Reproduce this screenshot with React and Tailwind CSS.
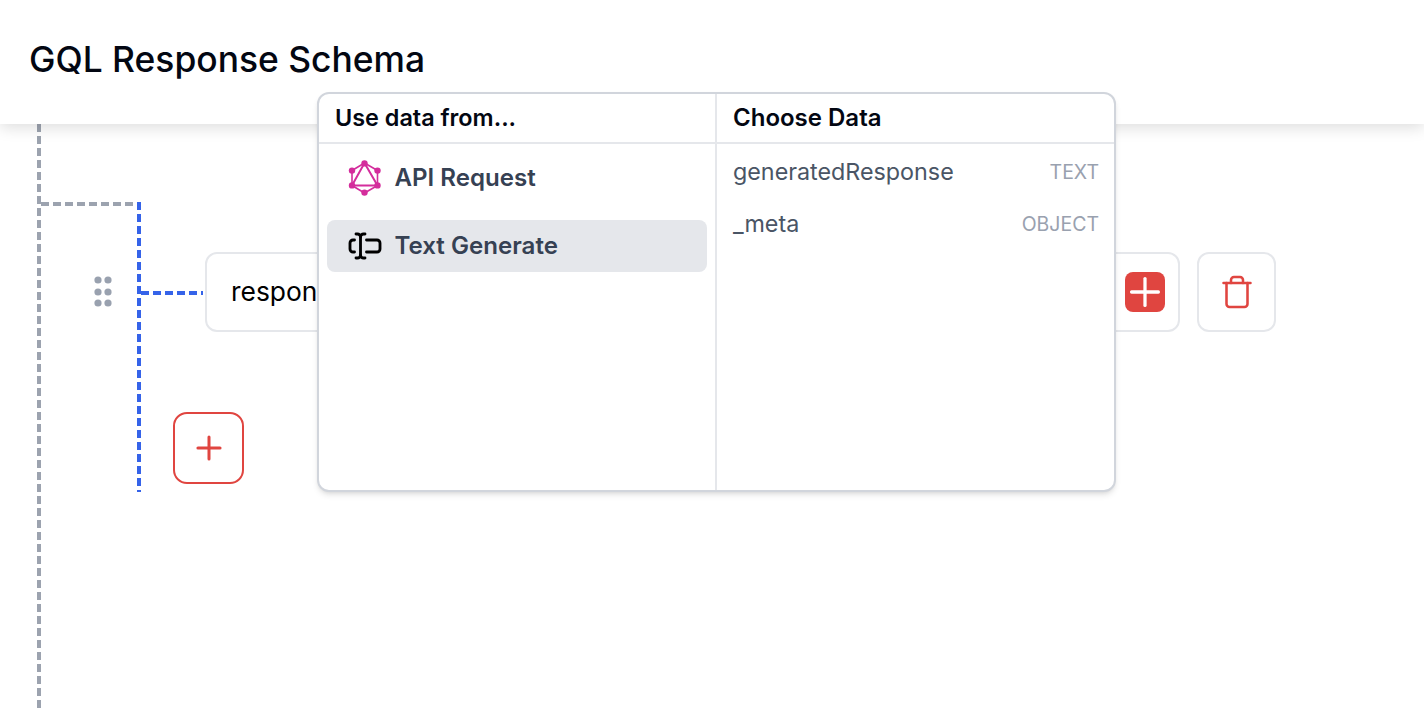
import { Plus, TextCursorInput, Trash } from "lucide-react";

const fields = [
  { name: "generatedResponse", type: "TEXT" },
  { name: "_meta", type: "OBJECT" },
];

function GripDots() {
  return (
    <svg width="18" height="32" viewBox="0 0 18 32" className="fill-gray-400">
      <circle cx="4" cy="4" r="3.6" />
      <circle cx="14" cy="4" r="3.6" />
      <circle cx="4" cy="16" r="3.6" />
      <circle cx="14" cy="16" r="3.6" />
      <circle cx="4" cy="27" r="3.6" />
      <circle cx="14" cy="27" r="3.6" />
    </svg>
  );
}

function GraphqlLogo() {
  return (
    <svg width="36" height="36" viewBox="0 0 36 36" fill="none" stroke="#d42d9c" strokeWidth="1.6">
      <path d="M17.5 3 30.5 10.5V25.5L17.5 33 5 25.5V10.5Z" />
      <path d="M17.5 3 30.5 25.5H5Z" strokeWidth="2" />
      <g fill="#d42d9c" stroke="none">
        <circle cx="17.5" cy="3.4" r="3.2" />
        <circle cx="30.5" cy="10.6" r="3.2" />
        <circle cx="30.5" cy="25.4" r="3.2" />
        <circle cx="17.5" cy="32.6" r="3.2" />
        <circle cx="5" cy="25.4" r="3.2" />
        <circle cx="5" cy="10.6" r="3.2" />
      </g>
    </svg>
  );
}

function DataPicker() {
  return (
    <div className="absolute z-20 left-[317px] top-[92px] w-[799px] h-[400px] flex bg-white border-2 border-gray-300 rounded-xl shadow-md overflow-hidden">
      <div className="w-[398px] shrink-0 border-r-2 border-gray-200 flex flex-col">
        <div className="h-[50px] shrink-0 flex items-center px-4 border-b-2 border-gray-200 text-[23.4px] font-semibold text-gray-950">
          Use data from...
        </div>
        <div className="flex flex-col gap-4 px-2 pt-2">
          <div className="h-[52px] flex items-center gap-[11.5px] px-5 rounded-lg text-[24.1px] font-semibold text-gray-700">
            <GraphqlLogo />
            API Request
          </div>
          <div className="h-[52px] flex items-center gap-[11.5px] px-5 rounded-lg bg-gray-200 text-[24.1px] font-semibold text-gray-700">
            <TextCursorInput className="w-[36px] h-[36px] text-black" strokeWidth={1.9} />
            Text Generate
          </div>
        </div>
      </div>
      <div className="flex-1 flex flex-col">
        <div className="h-[50px] shrink-0 flex items-center px-4 border-b-2 border-gray-200 text-[24px] font-semibold text-gray-950">
          Choose Data
        </div>
        <div className="flex flex-col pt-[2px]">
          {fields.map((f) => (
            <div key={f.name} className="h-[52px] flex items-center justify-between pl-4 pr-[15px] text-gray-600 text-[23.3px]">
              <span>{f.name}</span>
              <span className="text-[19.5px] text-gray-400 pt-[1px]">{f.type}</span>
            </div>
          ))}
        </div>
      </div>
    </div>
  );
}

export default function App() {
  return (
    <div className="relative h-[708px] overflow-hidden bg-white font-[Inter,sans-serif] text-black">
      <header className="relative z-10 h-[124px] bg-white shadow-[0_4px_14px_rgba(0,0,0,0.13)] pl-[29px] pt-[37px]">
        <h1 className="text-[35.4px] leading-[46px] font-medium text-gray-950">GQL Response Schema</h1>
      </header>

      <main className="h-[584px] flex pl-[37px]">
        <div className="w-[4px] h-full bg-[repeating-linear-gradient(to_bottom,#9ca3af_0_8px,transparent_8px_12px)]" />

        <div className="flex items-start pt-[78px]">
          <div className="w-[96px] flex flex-col">
            <div className="h-[4px] bg-[repeating-linear-gradient(to_right,#9ca3af_0_8px,transparent_8px_12px)]" />
            <div className="pl-[53px] pt-[70px]">
              <GripDots />
            </div>
          </div>

          <div className="w-[4px] h-[290px] bg-[repeating-linear-gradient(to_bottom,#3563e9_0_8px,transparent_8px_12px)]" />

          <div className="flex flex-col">
            <div className="flex items-center pt-[50px]">
              <div className="w-[62px] h-[4px] translate-y-[1px] bg-[repeating-linear-gradient(to_right,#3563e9_0_8px,transparent_8px_12px)]" />
              <div className="ml-[2px] w-[975px] h-[80px] flex items-center justify-between pl-[24px] pr-[13px] border-2 border-gray-200 rounded-xl text-[26.4px]">
                <span>response</span>
                <div className="w-[40px] h-[40px] flex items-center justify-center rounded-lg bg-[#e04540]">
                  <Plus className="shrink-0 w-[46px] h-[46px] text-white" strokeWidth={1.7} />
                </div>
              </div>
              <button className="ml-[17px] w-[79px] h-[80px] flex items-center justify-center border-2 border-gray-200 rounded-xl">
                <Trash className="w-[36px] h-[36px] text-[#e04540]" strokeWidth={1.7} />
              </button>
            </div>
            <button className="ml-[32px] mt-[80px] w-[71px] h-[72px] flex items-center justify-center border-2 border-[#e04540] rounded-[14px]">
              <Plus className="w-[38px] h-[38px] text-[#e04540]" strokeWidth={1.9} />
            </button>
          </div>
        </div>
      </main>

      <DataPicker />
    </div>
  );
}
